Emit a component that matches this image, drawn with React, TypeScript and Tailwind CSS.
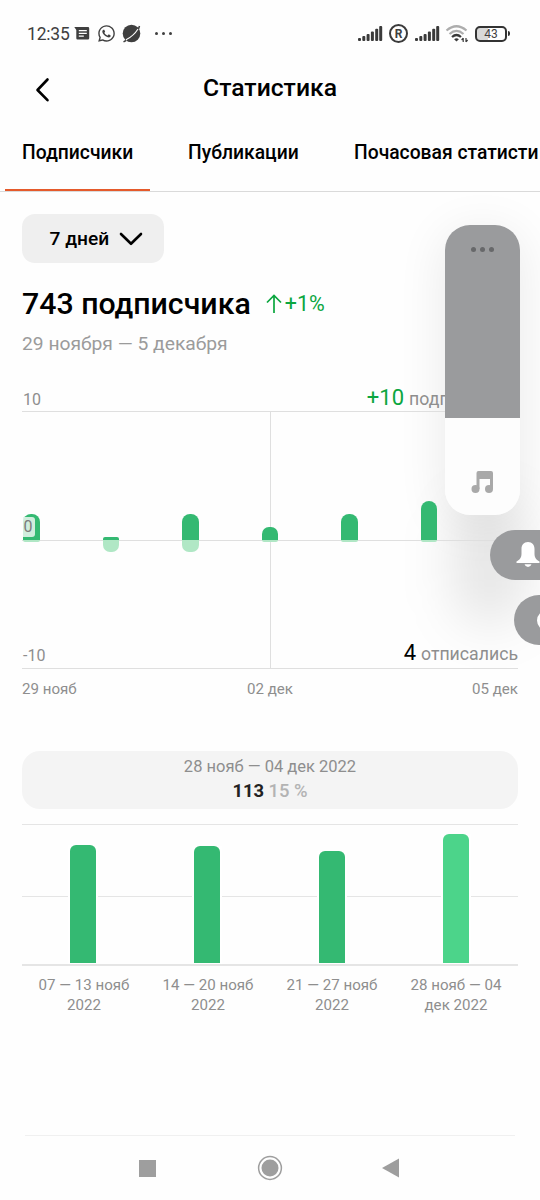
import { FaWhatsapp } from 'react-icons/fa'

const tabs = ['Подписчики', 'Публикации', 'Почасовая статисти']

// heights in px above / below the zero line
const days = [
  { id: '29', up: 26, down: 2, shape: 'rounded-t-[8px]' },
  { id: '30', up: 3, down: 12, shape: 'rounded-t-[2px]' },
  { id: '01', up: 26, down: 12, shape: 'rounded-t-[8px]' },
  { id: '02', up: 13, down: 2, shape: 'rounded-t-[7px]' },
  { id: '03', up: 26, down: 2, shape: 'rounded-t-[8px]' },
  { id: '04', up: 39, down: 2, shape: 'rounded-t-[8px]' },
  { id: '05', up: 0, down: 25, shape: '' },
]

const weeks = [
  { lines: ['07 — 13 нояб', '2022'], height: 118, color: 'bg-[#34b972]', pad: 'pr-[2px]' },
  { lines: ['14 — 20 нояб', '2022'], height: 117, color: 'bg-[#34b972]', pad: 'pr-[2px]' },
  { lines: ['21 — 27 нояб', '2022'], height: 112, color: 'bg-[#34b972]', pad: '' },
  { lines: ['28 нояб — 04', 'дек 2022'], height: 129, color: 'bg-[#4cd48a]', pad: '' },
]

function Signal() {
  return (
    <svg className="h-[17px] w-[25px]" viewBox="0 0 25 17" fill="#3a3a3a">
      <rect x="0" y="13" width="3" height="3" rx="1" />
      <rect x="4.3" y="11" width="3" height="5" rx="1" />
      <rect x="8.6" y="9" width="3" height="7" rx="1" />
      <rect x="12.9" y="6.5" width="3" height="9.5" rx="1" />
      <rect x="17.2" y="3.8" width="3" height="12.2" rx="1" />
      <rect x="21.2" y="1" width="3" height="15" rx="1" />
    </svg>
  )
}

function StatusBar() {
  return (
    <div className="flex h-[60px] items-center pt-[7px] pl-[27px] text-[#3f3f3f]">
      <span className="w-[47px] text-[17.5px] leading-5 tracking-[-0.2px]">12:35</span>
      <svg className="h-[14px] w-[16px]" viewBox="0 0 16 14">
        <path d="M.3 0H14q1.200 0 1.200 1.200V11.300q0 1.200-1.200 1.200H3.500q-1.200 0-1.200-1.200V3Z" fill="#3f3f3f" />
        <path d="M4.800 3.700h8M4.800 6.400h8M4.800 9.100h5" stroke="#fff" strokeWidth="1.300" />
      </svg>
      <FaWhatsapp className="ml-[7px] h-[19px] w-[19px]" />
      <svg className="ml-[5px] h-[20px] w-[20px]" viewBox="0 0 20 20">
        <circle cx="10.500" cy="9.500" r="8.800" fill="#3f3f3f" />
        <path d="M2.500 17.800 5 16.500M18.500 2l-1 3" stroke="#3f3f3f" strokeWidth="1.500" fill="none" />
        <path d="M5 15.800C9.500 13.500 14.500 9 17 5" stroke="#fff" strokeWidth="1.100" fill="none" />
      </svg>
      <div className="ml-[14px] flex gap-[4px]">
        <i className="h-[3px] w-[3px] rounded-full bg-[#3f3f3f]" />
        <i className="h-[3px] w-[3px] rounded-full bg-[#3f3f3f]" />
        <i className="h-[3px] w-[3px] rounded-full bg-[#3f3f3f]" />
      </div>

      <div className="mr-[30px] ml-auto flex items-center">
        <Signal />
        <span className="ml-[6px] flex h-[19px] w-[19px] items-center justify-center rounded-full border-2 border-[#3a3a3a] text-[12px] leading-none font-bold">
          R
        </span>
        <span className="ml-[7px] flex">
          <Signal />
        </span>
        <svg className="ml-[5px] h-[19px] w-[24px]" viewBox="0 0 24 19" fill="none">
          <path d="M1.500 6.500Q11.500-2 21.500 6.500" stroke="#adadad" strokeWidth="2.200" />
          <path d="M4.500 10Q11.500 3.800 18.500 10" stroke="#adadad" strokeWidth="2.200" />
          <path d="M7 13Q11.500 9 16 13" stroke="#3a3a3a" strokeWidth="2.200" />
          <path d="m11.500 17.500-2.400-2.300q2.400-1.800 4.800 0Z" fill="#3a3a3a" />
          <path d="M18.200 14v4M16.600 16l1.600-1.800M21 18v-4M22.600 16 21 17.800" stroke="#3a3a3a" strokeWidth="1.200" />
        </svg>
        <span className="ml-[6px] flex h-[16px] w-[32px] items-center justify-center rounded-[5px] border-2 border-[#333] bg-linear-to-r from-[#d9d9d9] from-40% to-white to-40% pt-px text-[12px] leading-none">
          43
        </span>
        <i className="ml-px h-[5px] w-[2px] rounded-r bg-[#333]" />
      </div>
    </div>
  )
}

function Header() {
  return (
    <div className="grid h-[60px] grid-cols-[80px_1fr_80px] items-center">
      <svg className="ml-[33px] h-[26px] w-[18px]" viewBox="0 0 18 26" fill="none" stroke="#000" strokeWidth="2.600" strokeLinecap="round" strokeLinejoin="round">
        <path d="M14.500 2.500 4.500 13l10 10.200" />
      </svg>
      <h1 className="-mt-[5px] text-center text-[24.700px] font-medium text-black">Статистика</h1>
    </div>
  )
}

function Tabs() {
  return (
    <div className="flex h-[72px] overflow-hidden border-b border-[#dadada] pl-[5px]">
      {tabs.map((tab, i) => (
        <div
          key={tab}
          className={
            i === 0
              ? 'mr-[22px] -mb-px flex w-[145px] shrink-0 flex-col justify-between pl-[17px]'
              : 'mr-[21px] w-[145px] shrink-0 pl-[16px]'
          }
        >
          <span className="mt-[21px] block text-[19.300px] leading-6 font-medium whitespace-nowrap text-black">{tab}</span>
          {i === 0 && <div className="-ml-[17px] h-[3px] bg-[#e55a2b]" />}
        </div>
      ))}
    </div>
  )
}

function DailyChart() {
  return (
    <section className="mx-[22px] mt-[28px] text-[#8e8e8e]">
      <div className="flex h-[27px] items-center justify-between">
        <span className="pt-[4px] pl-px text-[16px]">10</span>
        <span className="flex items-baseline gap-[5px] pt-[2px] text-[17.700px] leading-6">
          <b className="text-[22px] font-normal text-[#0ba63f]">+10</b>подписались
        </span>
      </div>

      <div className="relative h-[258px] border-y border-[#dfdfdf]">
        <div className="absolute top-[128px] h-px w-full bg-[#dfdfdf]" />
        <div className="absolute left-[248px] h-full w-px bg-[#dfdfdf]" />
        <div className="relative flex h-full justify-between px-[1px]">
          {days.map(d => (
            <div key={d.id} className="flex w-[16.500px] flex-col">
              <div className="flex h-[128px] flex-col justify-end">
                <div className={`bg-[#34b972] ${d.shape}`} style={{ height: d.up }} />
              </div>
              <div className="rounded-b-[7px] bg-[#b0e7c5]" style={{ height: d.down }} />
            </div>
          ))}
        </div>
        <span className="absolute top-[105px] left-[1px] flex h-[20px] w-[12px] items-center rounded-r-[3px] bg-[#e1f3e9]/90 pl-[0.500px] text-[16px] text-[#7b7b7b]">
          0
        </span>
        <span className="absolute bottom-0 left-px text-[16px] leading-[25px]">-10</span>
        <span className="absolute right-0 bottom-0 flex items-baseline gap-[5px] text-[17.700px] leading-7">
          <b className="text-[22px] font-normal text-black">4</b>отписались
        </span>
      </div>

      <div className="mt-[10px] grid grid-cols-3 text-[15.100px] leading-5">
        <span>29 нояб</span>
        <span className="text-center">02 дек</span>
        <span className="text-right">05 дек</span>
      </div>
    </section>
  )
}

function WeeklyChart() {
  return (
    <section className="mx-[22px] mt-[52px] text-[#8e8e8e]">
      <div className="flex h-[58px] flex-col items-center rounded-[18px] bg-[#f4f4f4] pt-[5px]">
        <span className="text-[16.500px] leading-[22px]">28 нояб — 04 дек 2022</span>
        <span className="text-[18.400px] leading-[25px] font-medium text-[#b3b3b3]">
          <b className="font-bold text-[#222]">113</b> 15 %
        </span>
      </div>

      <div className="relative mt-[15px] h-[142px] border-t border-b-2 border-[#e5e5e5]">
        <div className="absolute top-[71px] h-px w-full bg-[#e5e5e5]" />
        <div className="relative grid h-full grid-cols-4 items-end">
          {weeks.map(w => (
            <div key={w.lines[0]} className={`flex justify-center ${w.pad}`}>
              <div className="bg-white px-[2px] pb-px">
                <div className={`w-[26px] rounded-t-[6px] ${w.color}`} style={{ height: w.height }} />
              </div>
            </div>
          ))}
        </div>
      </div>

      <div className="mt-[9px] grid grid-cols-4 text-center text-[15.100px] leading-5">
        {weeks.map(w => (
          <div key={w.lines[0]}>
            <div>{w.lines[0]}</div>
            <div>{w.lines[1]}</div>
          </div>
        ))}
      </div>
    </section>
  )
}

function VolumePanel() {
  return (
    <div className="pointer-events-none absolute inset-0 overflow-hidden">
      <div className="absolute top-[225px] left-[445px] flex h-[290px] w-[75px] flex-col overflow-hidden rounded-[25px] bg-[#fdfdfd]">
        <div className="flex h-[193px] justify-center gap-[4px] bg-[#9a9b9d] pt-[22px]">
          <i className="h-[5px] w-[5px] rounded-full bg-[#67686a]" />
          <i className="h-[5px] w-[5px] rounded-full bg-[#67686a]" />
          <i className="h-[5px] w-[5px] rounded-full bg-[#67686a]" />
        </div>
        <svg className="mt-[53px] ml-[26px] h-[23px] w-[23px]" viewBox="0 0 23 23" fill="#a9a9a9">
          <path d="M5.500 2Q5.500 0 7.500 0H20q2 0 2 2V18h-3V8H8.500V18h-3Z" />
          <circle cx="4.500" cy="18" r="4" />
          <circle cx="18" cy="18" r="4" />
        </svg>
      </div>
      <div className="absolute top-[530px] left-[490px] flex h-[50px] w-[75px] items-center rounded-[25px] bg-[#9a9b9d] pl-[26px]">
        <svg className="h-[26px] w-[24px] shrink-0" viewBox="0 0 24 26" fill="#fff">
          <path d="M12 0C7.800 0 5.500 3 5.500 7v4.500c0 4-1.500 6-5 8v1.500h23v-1.500c-3.500-2-5-4-5-8V7c0-4-2.300-7-6.500-7Z" />
          <path d="M8.500 22.300h7q-.8 2.700-3.500 2.700t-3.500-2.700Z" />
        </svg>
      </div>
      <div className="absolute top-[595px] left-[514px] flex h-[50px] w-[75px] items-center rounded-[25px] bg-[#9a9b9d] pl-[23px]">
        <i className="h-[21px] w-[21px] rounded-full border-[4px] border-white" />
      </div>
    </div>
  )
}

export default function App() {
  return (
    <div className="relative flex h-[1200px] w-[540px] flex-col overflow-hidden bg-[#fefefe] font-['Roboto',sans-serif]">
      {/* soft shadows thrown by the volume panel onto the page */}
      <div className="pointer-events-none absolute top-[225px] left-[445px] h-[290px] w-[75px] rounded-[25px] shadow-[0_8px_50px_rgba(0,0,0,0.09)]" />
      <div className="pointer-events-none absolute top-[500px] left-[455px] h-[125px] w-[70px] rounded-full bg-black/10 blur-[26px]" />

      <div className="relative">
        <StatusBar />
        <Header />
        <Tabs />

        <button className="mt-[22px] ml-[22px] flex h-[49px] w-[142px] items-center rounded-[13px] bg-[#efefef] pl-[27.500px] text-[19.200px] font-medium text-black">
          <span className="pt-px">7 дней</span>
          <svg className="ml-[10px] h-[14px] w-[24px]" viewBox="0 0 24 14" fill="none" stroke="#000" strokeWidth="2.600" strokeLinecap="round" strokeLinejoin="round">
            <path d="m2 2 10 9.800L22 2" />
          </svg>
        </button>

        <div className="mt-[21px] ml-[22px] flex h-[40px] items-center">
          <h2 className="text-[30.300px] leading-10 font-medium text-black">743 подписчика</h2>
          <svg className="ml-[15px] h-[20px] w-[16px]" viewBox="0 0 16 20" fill="none" stroke="#0ba63f" strokeWidth="1.700">
            <path d="M8 19V2M1 8.500l7-7 7 7" />
          </svg>
          <span className="ml-[3px] text-[21.500px] text-[#0ba63f]">+1%</span>
        </div>
        <p className="mt-[8px] ml-[22px] text-[19.250px] leading-6 text-[#9b9b9b]">29 ноября — 5 декабря</p>

        <DailyChart />
        <WeeklyChart />
      </div>

      <VolumePanel />

      <nav className="mt-auto h-[65px]">
        <div className="mx-[25px] h-px bg-[#f0f0f0]" />
        <div className="flex h-[64px] items-center pl-[139px]">
          <i className="h-[17px] w-[17px] bg-[#9e9e9e]" />
          <svg className="ml-[101px] h-[26px] w-[26px]" viewBox="0 0 26 26">
            <circle cx="13" cy="13" r="11.400" fill="none" stroke="#9e9e9e" strokeWidth="1.500" />
            <circle cx="13" cy="13" r="8.500" fill="#9e9e9e" />
          </svg>
          <svg className="ml-[99px] h-[20px] w-[17px]" viewBox="0 0 17 20" fill="#9e9e9e">
            <path d="M0 10 17 .5v19Z" />
          </svg>
        </div>
      </nav>
    </div>
  )
}
